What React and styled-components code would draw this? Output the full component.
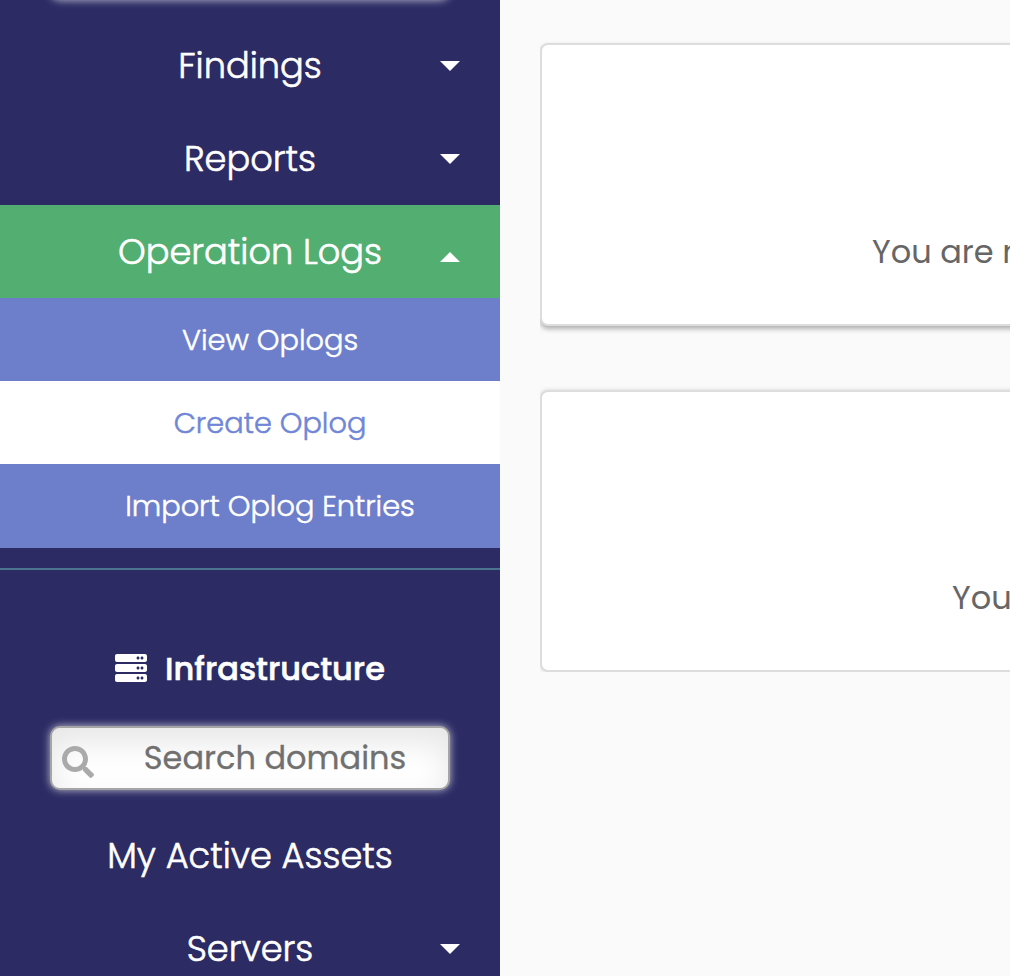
import React from "react";
import styled, { createGlobalStyle } from "styled-components";
import { FaServer, FaSearch } from "react-icons/fa";

const GlobalStyle = createGlobalStyle`
  * { box-sizing: border-box; }
  body {
    margin: 0;
    background: #fafafa;
    color: #666;
    font-family: Poppins, Inter, sans-serif;
    font-size: 32px;
    line-height: 1.5;
    overflow: hidden;
  }
`;

const Page = styled.div`
  display: flex;
  width: 1010px;
  height: 976px;
  overflow: hidden;
`;

const Sidebar = styled.nav`
  flex: 0 0 500px;
  height: 976px;
  overflow: hidden;
  background: #2c2b64;
  color: #fff;
  text-align: center;
`;

const SearchBox = styled.div`
  display: flex;
  align-items: center;
  width: 400px;
  height: 64px;
  margin: 0 auto;
  padding: 0 0 0 10px;
  color: #707070;
  -webkit-text-stroke: 0.3px currentColor;
  border: 2px solid #a5a5a5;
  border-radius: 10px;
  background: #fff;
  box-shadow: 0 0 8px rgba(255, 255, 255, 0.7), inset 0 14px 32px rgba(0, 0, 0, 0.1);

  svg {
    flex: none;
    margin-top: 9px;
    color: #aaa;
  }

  span {
    flex: 1;
    padding-left: 8px;
  }
`;

const PreviousSearch = styled(SearchBox)`
  margin-top: -64px;
`;

const Section = styled.div`
  padding: ${(p) => p.$top}px 0 20px;
  border-bottom: 2px solid #4a7490;
`;

const Group = styled.div`
  padding-top: 20px;
`;

const MenuItem = styled.div`
  display: grid;
  grid-template-columns: 60px 1fr 60px;
  align-items: center;
  height: 92.8px;
  font-size: 35.2px;
  font-weight: 300;
  -webkit-text-stroke: 0.6px currentColor;
  background: ${(p) => (p.$open ? "#52ae71" : "transparent")};

  > span {
    grid-column: 2;
    padding-top: 1px;
  }
`;

const Caret = styled.i`
  width: 0;
  height: 0;
  border-left: 10px solid transparent;
  border-right: 10px solid transparent;
  ${(p) => (p.$up ? "border-bottom: 10px solid #fff; margin-top: 11px;" : "border-top: 10px solid #fff;")}
`;

const SubItem = styled.div`
  height: 83.2px;
  padding: 21px 0 19px 40px;
  font-size: 28.8px;
  font-weight: 300;
  -webkit-text-stroke: 0.5px currentColor;
  color: ${(p) => (p.$active ? "#7086d6" : "#fff")};
  background: ${(p) => (p.$active ? "#fff" : "#6d7ecb")};
`;

const Heading = styled.h5`
  display: flex;
  align-items: center;
  justify-content: center;
  gap: 18px;
  height: 48px;
  margin: 75px 0 33px;
  font-size: 32px;
  font-weight: 500;
  -webkit-text-stroke: 0.6px currentColor;

  svg {
    margin-top: -2px;
  }
`;

const Main = styled.main`
  flex: 1;
  min-width: 0;
  display: flex;
  flex-direction: column;
  gap: 64px;
  padding: 43px 0 0 40px;
  overflow: hidden;
`;

const Card = styled.section`
  flex: none;
  width: 1100px;
  height: ${(p) => p.$height}px;
  padding: ${(p) => p.$top}px 0 0 ${(p) => p.$indent}px;
  white-space: nowrap;
  border: 2px solid #ddd;
  border-radius: 8px;
  background: #fff;
  box-shadow: ${(p) => (p.$raised ? "0 3px 5px rgba(0, 0, 0, 0.3)" : "0 0 4px rgba(0, 0, 0, 0.15)")};
  clip-path: ${(p) => (p.$raised ? "inset(-8px 0 -14px 0)" : "inset(-5px 0 0 0)")};
`;

function Item({ label, caret, open }) {
  return (
    <MenuItem $open={open}>
      <span>{label}</span>
      {caret && <Caret $up={open} />}
    </MenuItem>
  );
}

export default function App() {
  return (
    <Page>
      <GlobalStyle />
      <Sidebar>
        <PreviousSearch />
        <Section $top={19.6}>
          <Item label="Findings" caret />
          <Item label="Reports" caret />
          <Item label="Operation Logs" caret open />
          <SubItem>View Oplogs</SubItem>
          <SubItem $active>Create Oplog</SubItem>
          <SubItem>Import Oplog Entries</SubItem>
        </Section>
        <Heading>
          <FaServer size={32} strokeWidth={0} />
          Infrastructure
        </Heading>
        <SearchBox>
          <FaSearch size={32} />
          <span>Search domains</span>
        </SearchBox>
        <Group>
          <Item label="My Active Assets" />
          <Item label="Servers" caret />
        </Group>
      </Sidebar>
      <Main>
        <Card $height={283} $top={183} $indent={330} $raised>
          You are not assigned
        </Card>
        <Card $height={282} $top={182} $indent={410}>
          You have
        </Card>
      </Main>
    </Page>
  );
}
